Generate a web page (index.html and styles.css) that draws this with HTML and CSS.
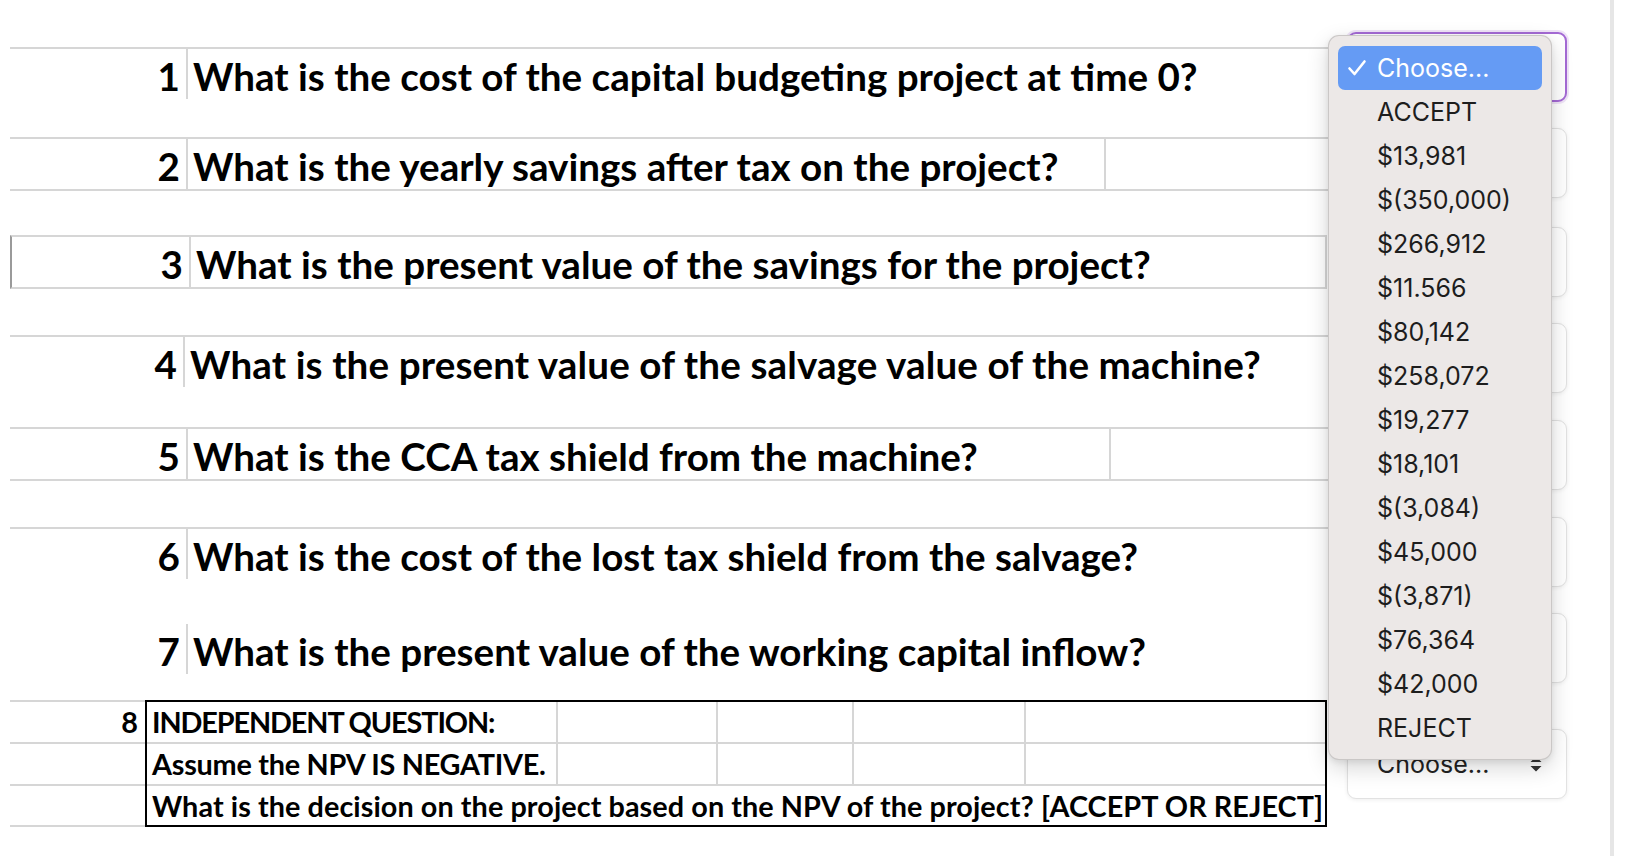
FILE: index.html
```html
<!DOCTYPE html>
<html lang="en">
<head>
<meta charset="utf-8">
<title>Capital budgeting questions</title>
<link rel="stylesheet" href="styles.css">
</head>
<body>
<div class="page">
  <div class="sheet">
    <div class="strip s1">
      <div class="num">1</div>
      <div class="txt">What is the cost of the capital budgeting project at time 0?</div>
    </div>
    <div class="strip s2 bottom">
      <div class="num">2</div>
      <div class="txt">What is the yearly savings after tax on the project?</div>
      <div class="rest"></div>
    </div>
    <div class="strip s3 bottom">
      <div class="num">3</div>
      <div class="txt">What is the present value of the savings for the project?</div>
    </div>
    <div class="strip s4">
      <div class="num">4</div>
      <div class="txt">What is the present value of the salvage value of the machine?</div>
    </div>
    <div class="strip s5 bottom">
      <div class="num">5</div>
      <div class="txt">What is the CCA tax shield from the machine?</div>
      <div class="rest"></div>
    </div>
    <div class="strip s6">
      <div class="num">6</div>
      <div class="txt">What is the cost of the lost tax shield from the salvage?</div>
    </div>
    <div class="strip s7 notop">
      <div class="num">7</div>
      <div class="txt">What is the present value of the working capital inflow?</div>
    </div>
    <div class="q8">
      <div class="num8">
        <div class="n8">8</div>
        <div class="n8"></div>
        <div class="n8"></div>
      </div>
      <div class="box">
        <div class="brow r1">
          <div class="c">INDEPENDENT QUESTION:</div><div class="c"></div><div class="c"></div><div class="c"></div><div class="c"></div>
        </div>
        <div class="brow r2">
          <div class="c">Assume the NPV IS NEGATIVE.</div><div class="c"></div><div class="c"></div><div class="c"></div><div class="c"></div>
        </div>
        <div class="brow r3">
          <div class="c">What is the decision on the project based on the NPV of the project? [ACCEPT OR REJECT]</div>
        </div>
      </div>
    </div>
  </div>

  <div class="answers">
    <div class="select focus a1"><span class="val">Choose...</span></div>
    <div class="select a2"><span class="val">Choose...</span></div>
    <div class="select a3"><span class="val">Choose...</span></div>
    <div class="select a4"><span class="val">Choose...</span></div>
    <div class="select a5"><span class="val">Choose...</span></div>
    <div class="select a6"><span class="val">Choose...</span></div>
    <div class="select a7"><span class="val">Choose...</span></div>
    <div class="select a8">
      <span class="val">Choose...</span>
      <svg class="arrows" width="14" height="18" viewBox="0 0 14 18"><path d="M1.5 7 L7 1.5 L12.5 7 Z M1.5 11 L12.5 11 L7 16.5 Z" fill="#333"/></svg>
    </div>

    <div class="menu">
      <div class="item sel"><svg class="check" width="20" height="18" viewBox="0 0 20 18"><path d="M2.5 9.5 L7.5 15 L17.5 2.5" fill="none" stroke="#fff" stroke-width="2.6" stroke-linecap="round" stroke-linejoin="round"/></svg>Choose...</div>
      <div class="item">ACCEPT</div>
      <div class="item">$13,981</div>
      <div class="item">$(350,000)</div>
      <div class="item">$266,912</div>
      <div class="item">$11.566</div>
      <div class="item">$80,142</div>
      <div class="item">$258,072</div>
      <div class="item">$19,277</div>
      <div class="item">$18,101</div>
      <div class="item">$(3,084)</div>
      <div class="item">$45,000</div>
      <div class="item">$(3,871)</div>
      <div class="item">$76,364</div>
      <div class="item">$42,000</div>
      <div class="item">REJECT</div>
    </div>
  </div>
</div>
</body>
</html>
```

FILE: styles.css
```css
* { box-sizing: border-box; }
html, body { margin: 0; padding: 0; background: #fff; }
body {
  width: 1636px;
  height: 856px;
  overflow: hidden;
  font-family: Lato, "Open Sans", "Liberation Sans", sans-serif;
  color: #000;
}
.page {
  display: flex;
  width: 1614px;
  height: 856px;
  border-right: 4px solid #e6e6e6;
}

/* ---------- spreadsheet strips ---------- */
.sheet {
  width: 1320px;
  margin-left: 10px;
  display: flex;
  flex-direction: column;
}
.strip {
  display: flex;
  height: 54px;
  border-top: 2px solid #d6d6d6;
  border-bottom: 2px solid transparent;
  font-weight: 700;
  font-size: 38.6px;
  white-space: nowrap;
}
.strip.bottom { border-bottom-color: #d6d6d6; }
.strip.notop { border-top-color: transparent; }
.strip .num {
  width: 176px;
  flex: none;
  text-align: right;
  padding-right: 6px;
  padding-top: 5px;
  line-height: 44px;
}
.strip .txt {
  flex: 1;
  border-left: 2px solid #d6d6d6;
  padding-left: 5px;
  padding-top: 5px;
  line-height: 44px;
}
.s1 { margin-top: 47px; }
.s2 { margin-top: 36px; }
.s2 .txt { flex: none; width: 918px; }
.s2 .rest { flex: 1; border-left: 2px solid #d6d6d6; }
.s3 {
  margin-top: 44px;
  width: 1317px;
  border-left: 2px solid #9a9a9a;
  border-right: 2px solid #d6d6d6;
}
.s3 .num { width: 177px; }
.s4 { margin-top: 46px; }
.s4 .num { width: 173px; }
.s4 .txt { letter-spacing: 0.12px; }
.s5 { margin-top: 38px; }
.s5 .txt { flex: none; width: 923px; }
.s5 .rest { flex: 1; border-left: 2px solid #d6d6d6; }
.s6 { margin-top: 46px; }
.s7 { margin-top: 41px; }

/* ---------- question 8 box ---------- */
.q8 {
  display: flex;
  margin-top: 24px;
  font-weight: 700;
  font-size: 28.8px;
  white-space: nowrap;
}
.num8 { width: 135px; flex: none; }
.n8 {
  height: 42px;
  border-top: 2px solid #d6d6d6;
  text-align: right;
  padding-right: 7px;
  line-height: 40px;
}
.n8:last-child { height: 43px; border-bottom: 2px solid #d6d6d6; }
.box {
  width: 1182px;
  border: 2px solid #000;
}
.brow {
  display: grid;
  grid-template-columns: 409px 160px 136px 172px 1fr;
}
.brow.r1 { height: 40px; letter-spacing: -1.1px; }
.brow.r2 { height: 42px; border-top: 2px solid #d6d6d6; letter-spacing: -0.25px; }
.brow.r3 { height: 41px; border-top: 2px solid #d6d6d6; display: block; letter-spacing: 0.07px; }
.brow .c {
  padding-left: 5px;
  line-height: 40px;
}
.brow .c + .c { border-left: 2px solid #d6d6d6; }

/* ---------- answer selects ---------- */
.answers {
  position: relative;
  width: 220px;
  margin-left: 17px;
  flex: none;
  display: flex;
  flex-direction: column;
  font-family: Inter, "Noto Sans", sans-serif;
  font-size: 25px;
  color: #222;
}
.select {
  height: 70px;
  flex: none;
  display: flex;
  align-items: center;
  justify-content: space-between;
  padding: 0 23px 0 29px;
  background: #fff;
  border: 1px solid #e2e2e2;
  border-radius: 9px;
  box-shadow: 0 1px 4px rgba(0, 0, 0, 0.07);
}
.select.focus {
  border: 2px solid #a46ad4;
  box-shadow: 0 0 0 2px rgba(164, 106, 212, 0.18);
}
.a1 { margin-top: 32px; }
.a2 { margin-top: 26px; }
.a3 { margin-top: 29px; }
.a4 { margin-top: 26px; }
.a5 { margin-top: 27px; }
.a6 { margin-top: 27px; }
.a7 { margin-top: 26px; }
.a8 { margin-top: 46px; }
.arrows { flex: none; }

/* ---------- open dropdown menu ---------- */
.menu {
  position: absolute;
  left: -19px;
  top: 35px;
  width: 224px;
  padding: 10px 9px 9px;
  background: #ece8e7;
  border: 1px solid rgba(0, 0, 0, 0.14);
  border-radius: 11px;
  box-shadow: 0 8px 22px rgba(0, 0, 0, 0.16), 0 2px 6px rgba(0, 0, 0, 0.08);
  z-index: 10;
}
.item {
  position: relative;
  height: 44px;
  line-height: 44px;
  padding-left: 39px;
  color: #1d1d1d;
  border-radius: 7px;
  white-space: nowrap;
}
.item.sel {
  background: #659bf4;
  color: #fff;
}
.check {
  position: absolute;
  left: 9px;
  top: 13px;
}
```
